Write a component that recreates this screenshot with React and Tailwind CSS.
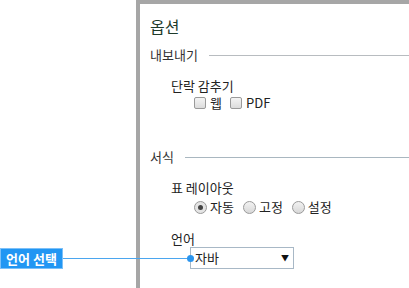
export default function App() {
  const font = { fontFamily: '"Noto Sans CJK KR", "Noto Sans", sans-serif' };
  return (
    <div className="relative w-[409px] h-[288px] overflow-hidden bg-white text-[#222]" style={font}>
      <div className="ml-[136px] h-[300px] border-l-4 border-t-4 border-[#a6a6a6] pl-[10px] pt-[12px]">
        <div className="h-[20px] text-[16px] leading-[20px] text-[#1e3a2a]">옵션</div>
        <div className="mt-[9px] flex h-[20px] items-center">
          <span className="text-[13px] leading-[20px] text-[#333]">내보내기</span>
          <div className="ml-[11px] h-px flex-1 bg-[#b8bcc0]" />
        </div>
        <div className="mt-[13px] pl-[21px] text-[13px] leading-[16px]">단락 감추기</div>
        <div className="mt-[1px] flex h-[16px] items-center pl-[44px] text-[13px] leading-[16px]">
          <span className="mr-[4px] h-[12px] w-[12px] rounded-[2px] border border-[#9a9a9a] bg-gradient-to-b from-[#f4f4f4] to-[#dcdcdc]" />
          <span>웹</span>
          <span className="ml-[8px] mr-[4px] h-[12px] w-[12px] rounded-[2px] border border-[#9a9a9a] bg-gradient-to-b from-[#f4f4f4] to-[#dcdcdc]" />
          <span>PDF</span>
        </div>
        <div className="mt-[38px] flex h-[16px] items-center">
          <span className="text-[13px] leading-[16px] text-[#333]">서식</span>
          <div className="ml-[11px] h-px flex-1 bg-[#a9b7c0]" />
        </div>
        <div className="mt-[15px] pl-[21px] text-[13px] leading-[16px]">표 레이아웃</div>
        <div className="mt-[3px] flex h-[16px] items-center pl-[44px] text-[13px] leading-[16px]">
          <span className="mr-[3px] flex h-[13px] w-[13px] items-center justify-center rounded-full border border-[#9a9a9a] bg-[#e4e4e4]">
            <span className="h-[5px] w-[5px] rounded-full bg-[#444]" />
          </span>
          <span>자동</span>
          <span className="ml-[9px] mr-[3px] h-[13px] w-[13px] rounded-full border border-[#9a9a9a] bg-gradient-to-b from-[#f2f2f2] to-[#d8d8d8]" />
          <span>고정</span>
          <span className="ml-[9px] mr-[3px] h-[13px] w-[13px] rounded-full border border-[#9a9a9a] bg-gradient-to-b from-[#f2f2f2] to-[#d8d8d8]" />
          <span>설정</span>
        </div>
        <div className="mt-[16px] pl-[21px] text-[13px] leading-[16px]">언어</div>
        <div className="ml-[40px] mt-[0px] flex h-[22px] w-[104px] items-center justify-between border border-[#a8b8c6] pl-[4px] pr-[4px] text-[13px]">
          <span>자바</span>
          <span className="text-[8px] text-[#111]">▼</span>
        </div>
      </div>
      <div className="absolute left-0 top-[248px] flex items-center">
        <div className="flex h-[21px] w-[63px] items-center justify-center border border-[#7cc0f8] bg-[#2196f3] text-[13px] font-bold text-white">
          언어 선택
        </div>
        <div className="h-px w-[127px] bg-[#4ba6ef]" />
        <div className="-ml-[3px] h-[7px] w-[7px] rounded-full bg-[#2b95ee]" />
      </div>
    </div>
  );
}
